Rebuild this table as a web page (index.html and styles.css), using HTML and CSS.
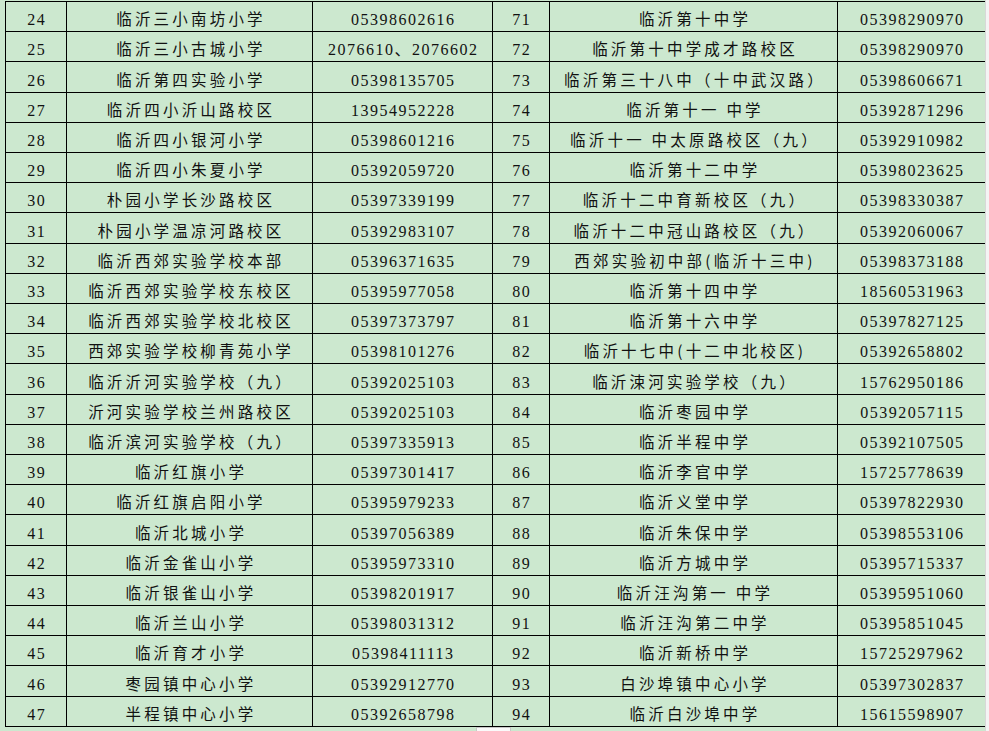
FILE: index.html
```html
<!DOCTYPE html>
<html lang="zh-CN">
<head>
<meta charset="utf-8">
<title>学校电话表</title>
<link rel="stylesheet" href="styles.css">
</head>
<body>
<table class="sheet">
  <colgroup>
    <col class="c-no"><col class="c-name"><col class="c-tel"><col class="c-no2"><col class="c-name2"><col class="c-tel2">
  </colgroup>
  <tbody>
    <tr><td class="num">24</td><td class="cn">临沂三小南坊小学</td><td class="num">05398602616</td><td class="num">71</td><td class="cn">临沂第十中学</td><td class="num">05398290970</td></tr>
    <tr><td class="num">25</td><td class="cn">临沂三小古城小学</td><td class="num">2076610、2076602</td><td class="num">72</td><td class="cn">临沂第十中学成才路校区</td><td class="num">05398290970</td></tr>
    <tr><td class="num">26</td><td class="cn">临沂第四实验小学</td><td class="num">05398135705</td><td class="num">73</td><td class="cn">临沂第三十八中（十中武汉路）</td><td class="num">05398606671</td></tr>
    <tr><td class="num">27</td><td class="cn">临沂四小沂山路校区</td><td class="num">13954952228</td><td class="num">74</td><td class="cn">临沂第十一 中学</td><td class="num">05392871296</td></tr>
    <tr><td class="num">28</td><td class="cn">临沂四小银河小学</td><td class="num">05398601216</td><td class="num">75</td><td class="cn">临沂十一 中太原路校区（九）</td><td class="num">05392910982</td></tr>
    <tr><td class="num">29</td><td class="cn">临沂四小朱夏小学</td><td class="num">05392059720</td><td class="num">76</td><td class="cn">临沂第十二中学</td><td class="num">05398023625</td></tr>
    <tr><td class="num">30</td><td class="cn">朴园小学长沙路校区</td><td class="num">05397339199</td><td class="num">77</td><td class="cn">临沂十二中育新校区（九）</td><td class="num">05398330387</td></tr>
    <tr><td class="num">31</td><td class="cn">朴园小学温凉河路校区</td><td class="num">05392983107</td><td class="num">78</td><td class="cn">临沂十二中冠山路校区（九）</td><td class="num">05392060067</td></tr>
    <tr><td class="num">32</td><td class="cn">临沂西郊实验学校本部</td><td class="num">05396371635</td><td class="num">79</td><td class="cn">西郊实验初中部(临沂十三中)</td><td class="num">05398373188</td></tr>
    <tr><td class="num">33</td><td class="cn">临沂西郊实验学校东校区</td><td class="num">05395977058</td><td class="num">80</td><td class="cn">临沂第十四中学</td><td class="num">18560531963</td></tr>
    <tr><td class="num">34</td><td class="cn">临沂西郊实验学校北校区</td><td class="num">05397373797</td><td class="num">81</td><td class="cn">临沂第十六中学</td><td class="num">05397827125</td></tr>
    <tr><td class="num">35</td><td class="cn">西郊实验学校柳青苑小学</td><td class="num">05398101276</td><td class="num">82</td><td class="cn">临沂十七中(十二中北校区)</td><td class="num">05392658802</td></tr>
    <tr><td class="num">36</td><td class="cn">临沂沂河实验学校（九）</td><td class="num">05392025103</td><td class="num">83</td><td class="cn">临沂涑河实验学校（九）</td><td class="num">15762950186</td></tr>
    <tr><td class="num">37</td><td class="cn">沂河实验学校兰州路校区</td><td class="num">05392025103</td><td class="num">84</td><td class="cn">临沂枣园中学</td><td class="num">05392057115</td></tr>
    <tr><td class="num">38</td><td class="cn">临沂滨河实验学校（九）</td><td class="num">05397335913</td><td class="num">85</td><td class="cn">临沂半程中学</td><td class="num">05392107505</td></tr>
    <tr><td class="num">39</td><td class="cn">临沂红旗小学</td><td class="num">05397301417</td><td class="num">86</td><td class="cn">临沂李官中学</td><td class="num">15725778639</td></tr>
    <tr><td class="num">40</td><td class="cn">临沂红旗启阳小学</td><td class="num">05395979233</td><td class="num">87</td><td class="cn">临沂义堂中学</td><td class="num">05397822930</td></tr>
    <tr><td class="num">41</td><td class="cn">临沂北城小学</td><td class="num">05397056389</td><td class="num">88</td><td class="cn">临沂朱保中学</td><td class="num">05398553106</td></tr>
    <tr><td class="num">42</td><td class="cn">临沂金雀山小学</td><td class="num">05395973310</td><td class="num">89</td><td class="cn">临沂方城中学</td><td class="num">05395715337</td></tr>
    <tr><td class="num">43</td><td class="cn">临沂银雀山小学</td><td class="num">05398201917</td><td class="num">90</td><td class="cn">临沂汪沟第一 中学</td><td class="num">05395951060</td></tr>
    <tr><td class="num">44</td><td class="cn">临沂兰山小学</td><td class="num">05398031312</td><td class="num">91</td><td class="cn">临沂汪沟第二中学</td><td class="num">05395851045</td></tr>
    <tr><td class="num">45</td><td class="cn">临沂育才小学</td><td class="num">05398411113</td><td class="num">92</td><td class="cn">临沂新桥中学</td><td class="num">15725297962</td></tr>
    <tr><td class="num">46</td><td class="cn">枣园镇中心小学</td><td class="num">05392912770</td><td class="num">93</td><td class="cn">白沙埠镇中心小学</td><td class="num">05397302837</td></tr>
    <tr><td class="num">47</td><td class="cn">半程镇中心小学</td><td class="num">05392658798</td><td class="num">94</td><td class="cn">临沂白沙埠中学</td><td class="num">15615598907</td></tr>
  </tbody>
</table>
<div class="edge-strip"></div>
<div class="paste-tab"></div>
</body>
</html>
```

FILE: styles.css
```css
html, body {
  margin: 0;
  padding: 0;
  background: #cce8cf;
  width: 989px;
  height: 731px;
  overflow: hidden;
}

body {
  position: relative;
  font-family: "Liberation Serif", "Noto Sans CJK SC", serif;
  color: #111;
}

.sheet {
  border-collapse: collapse;
  table-layout: fixed;
  width: 980px;
  height: 726px;
  margin: 1px 0 0 5px;
}

.c-no { width: 61px; }
.c-name { width: 246px; }
.c-tel { width: 180px; }
.c-no2 { width: 57px; }
.c-name2 { width: 288px; }
.c-tel2 { width: 148px; }

.sheet td {
  border: 1px solid #000;
  padding: 0 0 1px 0;
  text-align: center;
  vertical-align: bottom;
  font-size: 16px;
  line-height: 20px;
  white-space: nowrap;
  overflow: hidden;
}

.sheet tr {
  height: 30px;
}

.sheet td.num {
  letter-spacing: 1.5px;
  padding-left: 1.5px;
}

.sheet td.cn {
  font-family: "Noto Sans CJK SC", "Liberation Serif", sans-serif;
  font-size: 15.5px;
  letter-spacing: 3.2px;
  padding-left: 3px;
  padding-bottom: 3px;
}

.edge-strip {
  position: absolute;
  top: 0;
  right: 0;
  width: 3px;
  height: 731px;
  background: #f4f4f4;
  border-left: 1px solid #d8d8d8;
}

.paste-tab {
  position: absolute;
  left: 476px;
  top: 727px;
  width: 33px;
  height: 8px;
  background: #fafafa;
  border: 1px solid #c8c8c8;
}
```
